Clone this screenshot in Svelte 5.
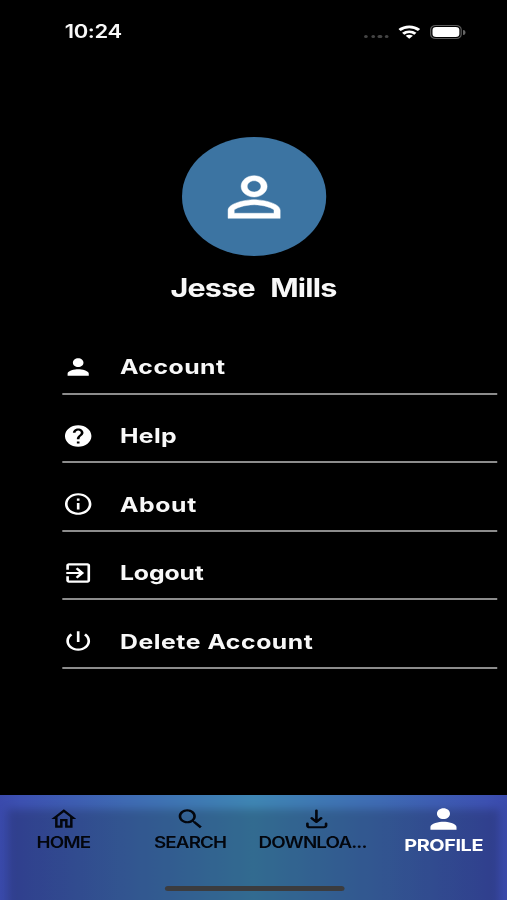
<script>
  const rows = [
    { label: 'Account', ls: 0.4, d: 'M12 12c2.21 0 4-1.79 4-4s-1.79-4-4-4-4 1.79-4 4 1.79 4 4 4zm0 2c-2.67 0-8 1.34-8 4v2h16v-2c0-2.66-5.33-4-8-4z' },
    { label: 'Help', ls: 0.3, d: 'M12 2C6.48 2 2 6.48 2 12s4.48 10 10 10 10-4.48 10-10S17.52 2 12 2zm1 17h-2v-2h2v2zm2.07-7.75l-.9.92C13.45 12.9 13 13.5 13 15h-2v-.5c0-1.1.45-2.1 1.17-2.83l1.24-1.26c.37-.36.59-.86.59-1.41 0-1.1-.9-2-2-2s-2 .9-2 2H8c0-2.21 1.79-4 4-4s4 1.79 4 4c0 .88-.36 1.68-.93 2.25z' },
    { label: 'About', ls: 0.5, d: 'M11 7h2v2h-2zm0 4h2v6h-2zm1-9C6.48 2 2 6.48 2 12s4.48 10 10 10 10-4.48 10-10S17.52 2 12 2zm0 18c-4.41 0-8-3.59-8-8s3.59-8 8-8 8 3.59 8 8-3.59 8-8 8z' },
    { label: 'Logout', ls: -0.1, d: 'M10.09 15.59L11.5 17l5-5-5-5-1.41 1.41L12.67 11H3v2h9.67l-2.58 2.59zM19 3H5c-1.11 0-2 .9-2 2v4h2V5h14v14H5v-4H3v4c0 1.1.89 2 2 2h14c1.1 0 2-.9 2-2V5c0-1.1-.9-2-2-2z' },
    { label: 'Delete Account', ls: 0.45, d: 'M13 3h-2v10h2V3zm4.83 2.17l-1.42 1.42C17.99 7.86 19 9.81 19 12c0 3.87-3.13 7-7 7s-7-3.13-7-7c0-2.19 1.01-4.14 2.58-5.42L6.17 5.17C4.23 6.82 3 9.26 3 12c0 4.97 4.03 9 9 9s9-4.03 9-9c0-2.74-1.23-5.18-3.17-6.83z' }
  ];
</script>

<div class="viewport">
  <div class="screen">
    <header class="status">
      <span class="time">10:24</span>
      <div class="signals">
        <div class="dots"><i></i><i></i><i></i><i></i></div>
        <svg class="wifi" viewBox="0 0 18 14" fill="none" stroke="#fff" stroke-width="2.7">
          <path d="M1 5.1C5.5.9 12.5.9 17 5.1" />
          <path d="M4 8.7c2.9-2.6 7.1-2.6 10 0" />
          <path d="M9 13.8L6 10.8c1.7-1.5 4.3-1.5 6 0z" fill="#fff" stroke="none" />
        </svg>
        <div class="battery"><span></span></div>
        <i class="nub"></i>
      </div>
    </header>

    <section class="profile">
      <div class="avatar">
        <svg viewBox="0 0 24 24" width="64" height="64"><path fill="#fff" stroke="#fff" stroke-width=".15" d="M12 5.9c1.16 0 2.1.94 2.1 2.1s-.94 2.1-2.1 2.1S9.9 9.16 9.9 8s.94-2.1 2.1-2.1m0 9c2.97 0 6.1 1.46 6.1 2.1v1.1H5.9V17c0-.64 3.13-2.1 6.1-2.1M12 4C9.79 4 8 5.79 8 8s1.79 4 4 4 4-1.79 4-4-1.79-4-4-4zm0 9c-2.67 0-8 1.34-8 4v3h16v-3c0-2.66-5.33-4-8-4z" /></svg>
      </div>
      <h1>Jesse&nbsp; Mills</h1>
    </section>

    <ul class="menu">
      {#each rows as row}
        <li>
          <svg viewBox="0 0 24 24" width="26" height="26"><path fill="#fff" d={row.d} /></svg>
          <span style="letter-spacing: {row.ls}px">{row.label}</span>
        </li>
      {/each}
    </ul>

    <nav>
      <div class="shade"></div>
      <div class="tab">
        <div class="icon"><svg viewBox="0 0 24 24" width="24.5" height="26" preserveAspectRatio="none"><path d="M12 5.69l5 4.5V18h-2v-6H9v6H7v-7.81l5-4.5M12 3L2 12h3v8h6v-6h2v6h6v-8h3z" /></svg></div>
        <span class="home">HOME</span>
      </div>
      <div class="tab">
        <div class="icon"><svg viewBox="0 0 24 24" width="26" height="26"><path d="M15.5 14h-.79l-.28-.27C15.41 12.59 16 11.11 16 9.5 16 5.91 13.09 3 9.5 3S3 5.91 3 9.5 5.91 16 9.5 16c1.61 0 3.09-.59 4.23-1.57l.27.28v.79l5 4.99L20.49 19l-4.99-5zm-6 0C7.01 14 5 11.99 5 9.5S7.01 5 9.5 5 14 7.01 14 9.5 11.99 14 9.5 14z" /></svg></div>
        <span class="search">SEARCH</span>
      </div>
      <div class="tab">
        <div class="icon"><svg viewBox="0 0 24 24" width="26" height="26" fill="none" stroke="#03060d" stroke-width="2" stroke-linecap="round" stroke-linejoin="round"><path d="M12 4.2v10M8.4 11.2l3.6 3.5 3.6-3.5M5.2 16.2V18a1.6 1.6 0 0 0 1.6 1.6h10.9a1.6 1.6 0 0 0 1.6-1.6v-1.8" /></svg></div>
        <span class="download">DOWNLOA...</span>
      </div>
      <div class="tab active">
        <div class="icon"><svg viewBox="0 0 24 24" width="32" height="32"><path d={rows[0].d} /></svg></div>
        <span class="me">PROFILE</span>
      </div>
      <div class="indicator"></div>
    </nav>
  </div>
</div>

<style>
  :global(body) { background: #000; }
  .viewport { width: 507px; height: 900px; overflow: hidden; background: #000; }
  /* The layout is authored 415px wide and stretched across the viewport. */
  .screen {
    width: 415px; height: 900px; display: flex; flex-direction: column;
    transform: scaleX(1.22169); transform-origin: 0 0;
    color: #f8f8f8; font-family: Inter, "Liberation Sans", sans-serif;
  }
  svg { display: block; }
  .status { height: 64px; padding: 0 34.5px 0 53px; display: flex; align-items: center; justify-content: space-between; box-sizing: border-box; flex: none; }
  .time { font-size: 18px; font-weight: 600; line-height: 20px; letter-spacing: -.3px; }
  .signals { display: flex; align-items: center; }
  .dots { display: flex; gap: 2.2px; margin: 9px 8px 0 0; }
  .dots i { width: 3.4px; height: 3.6px; border-radius: 50%; background: #444; }
  .wifi { width: 18px; height: 14px; margin: -1px 7.5px 0 0; }
  .battery { width: 26.4px; height: 14.5px; box-sizing: border-box; border: 1.3px solid #5c5c5c; border-radius: 4.5px; padding: 1px; display: flex; }
  .battery span { flex: 1; background: #fff; border-radius: 3px; }
  .nub { width: 1.5px; height: 5px; margin-left: 1px; background: #666; border-radius: 0 2px 2px 0; }
  .profile { display: flex; flex-direction: column; align-items: center; padding-top: 73.4px; flex: none; height: 261px; box-sizing: border-box; }
  .avatar { width: 118.5px; height: 118.5px; border-radius: 50%; background: #3c74a2; display: flex; align-items: center; justify-content: center; margin-left: 1px; }
  h1 { margin: 16.6px 0 0; font-size: 25px; line-height: 32px; font-weight: 700; white-space: pre; letter-spacing: -.65px; word-spacing: 1px; }
  .menu { list-style: none; margin: 0; padding: 0 8.2px 0 51.2px; flex: none; height: 469.5px; box-sizing: border-box; }
  .menu li { height: 68.55px; box-sizing: border-box; border-bottom: 2px solid #8c8c8c; display: flex; align-items: center; padding-top: 15.4px; }
  .menu li:first-child { margin-top: 1px; }
  .menu span { font-size: 20.3px; line-height: 26px; font-weight: 700; margin: 1px 0 0 21px; white-space: nowrap; }
  nav { position: relative; height: 105.5px; display: flex; overflow: hidden; background: linear-gradient(90deg, #3a4aac 0%, #3d51b2 4%, #3f6bb4 25%, #3f86b4 50%, #3f6bb4 75%, #3d51b2 96%, #3a4aac 100%); }
  .shade { position: absolute; inset: 14px 6px -12px 6px; background: rgba(0, 0, 0, .2); filter: blur(4px); }
  .tab { position: relative; flex: 1; display: flex; flex-direction: column; align-items: center; color: #03060d; font-size: 15.4px; font-weight: 600; line-height: 20px; padding-top: 11px; white-space: nowrap; letter-spacing: -.7px; }
  .icon { height: 27px; display: flex; align-items: center; }
  .tab span { margin-top: .5px; }
  .tab path { fill: currentColor; }
  .tab svg[fill="none"] path { fill: none; }
  .tab .download { margin-right: 7px; }
  .active { color: #fff; font-size: 16.3px; font-weight: 700; letter-spacing: -.35px; }
  .tab.active span { margin-top: 2px; }
  .indicator { position: absolute; left: 134.6px; top: 91.4px; width: 147px; height: 5.5px; border-radius: 3px; background: #3b3c3f; }
</style>
